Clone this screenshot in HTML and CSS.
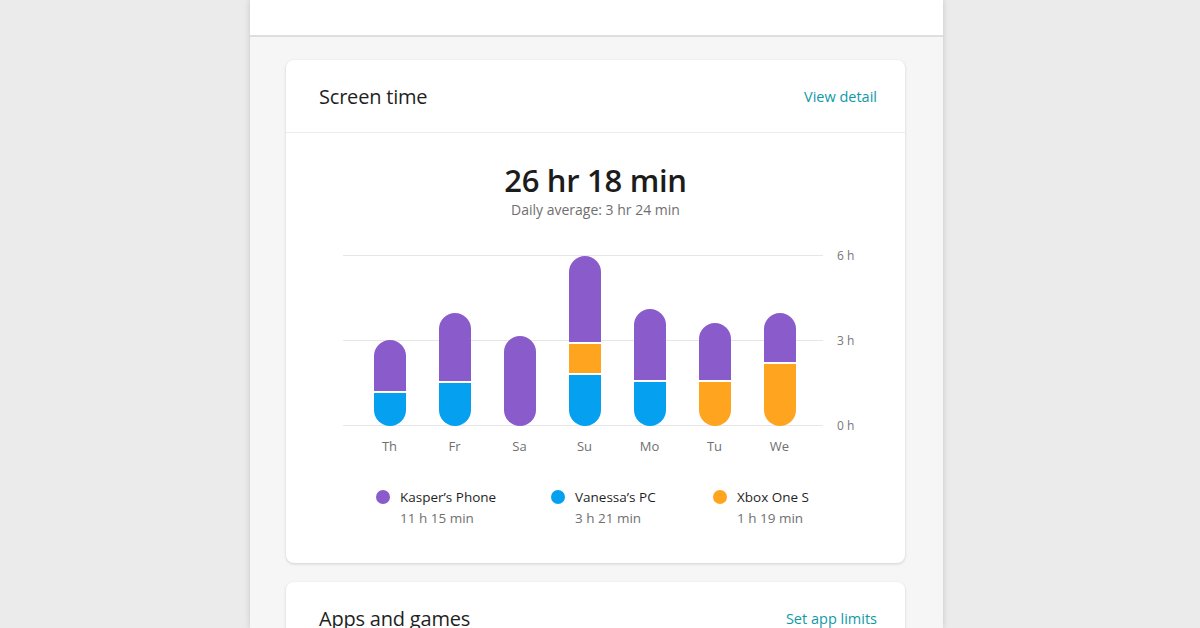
FILE: index.html
```html
<!DOCTYPE html>
<html lang="en">
<head>
<meta charset="utf-8">
<title>Screen time</title>
<link rel="stylesheet" href="styles.css">
</head>
<body>
<div class="page">
  <div class="topbar"></div>
  <div class="content">
    <section class="card">
      <header class="card-header">
        <h2 class="card-title">Screen time</h2>
        <a class="card-link" href="#">View detail</a>
      </header>
      <div class="card-body">
        <div class="summary">
          <div class="total">26 hr 18 min</div>
          <div class="average">Daily average: 3 hr 24 min</div>
        </div>
        <div class="chart">
          <div class="plot">
            <div class="col"><div class="bar"><div class="seg purple" style="height:51px"></div><div class="seg blue" style="height:33px"></div></div></div>
            <div class="col"><div class="bar"><div class="seg purple" style="height:68px"></div><div class="seg blue" style="height:43px"></div></div></div>
            <div class="col"><div class="bar"><div class="seg purple" style="height:90px"></div></div></div>
            <div class="col"><div class="bar"><div class="seg purple" style="height:86px"></div><div class="seg orange" style="height:29px"></div><div class="seg blue" style="height:51px"></div></div></div>
            <div class="col"><div class="bar"><div class="seg purple" style="height:71px"></div><div class="seg blue" style="height:44px"></div></div></div>
            <div class="col"><div class="bar"><div class="seg purple" style="height:57px"></div><div class="seg orange" style="height:44px"></div></div></div>
            <div class="col"><div class="bar"><div class="seg purple" style="height:49px"></div><div class="seg orange" style="height:62px"></div></div></div>
          </div>
          <div class="axis">
            <span>6 h</span>
            <span>3 h</span>
            <span>0 h</span>
          </div>
          <div class="days">
            <span>Th</span><span>Fr</span><span>Sa</span><span>Su</span><span>Mo</span><span>Tu</span><span>We</span>
          </div>
        </div>
        <div class="legend">
          <div class="legend-item">
            <span class="dot purple"></span>
            <div class="legend-text"><div class="legend-name">Kasper’s Phone</div><div class="legend-time">11 h 15 min</div></div>
          </div>
          <div class="legend-item">
            <span class="dot blue"></span>
            <div class="legend-text"><div class="legend-name">Vanessa’s PC</div><div class="legend-time">3 h 21 min</div></div>
          </div>
          <div class="legend-item">
            <span class="dot orange"></span>
            <div class="legend-text"><div class="legend-name">Xbox One S</div><div class="legend-time">1 h 19 min</div></div>
          </div>
        </div>
      </div>
    </section>
    <section class="card">
      <header class="card-header">
        <h2 class="card-title">Apps and games</h2>
        <a class="card-link" href="#">Set app limits</a>
      </header>
    </section>
  </div>
</div>
</body>
</html>
```

FILE: styles.css
```css
* { box-sizing: border-box; }
html, body { margin: 0; padding: 0; }
body {
  background: #ebebeb;
  font-family: "Open Sans", "Noto Sans", sans-serif;
  color: #1f1f1f;
  height: 628px;
  overflow: hidden;
}
.page {
  width: 693px;
  margin-left: 250px;
  height: 628px;
  background: #f6f6f6;
  box-shadow: 0 0 6px rgba(0,0,0,0.16);
}
.topbar {
  height: 37px;
  background: #fff;
  border-bottom: 2px solid #dedede;
}
.content {
  padding: 23px 38px 0 36px;
  display: flex;
  flex-direction: column;
  gap: 19px;
}
.card {
  background: #fff;
  border-radius: 8px;
  box-shadow: 0 1px 3px rgba(0,0,0,0.16);
}
.card-header {
  height: 73px;
  display: flex;
  align-items: center;
  justify-content: space-between;
  padding: 0 28px 0 33px;
  border-bottom: 1px solid #ececec;
}
.card-title {
  margin: 0;
  font-size: 20px;
  font-weight: 400;
  color: #1f1f1f;
  letter-spacing: -0.2px;
}
.card-link {
  color: #0f9aa6;
  text-decoration: none;
  font-size: 14.5px;
}
.card-body {
  padding: 28px 0 35px;
}
.summary {
  text-align: center;
}
.total {
  font-size: 31px;
  line-height: 38px;
  font-weight: 600;
  color: #1c1c1c;
  letter-spacing: -0.3px;
}
.average {
  font-size: 14px;
  line-height: 20px;
  margin-top: 1px;
  color: #6f6f6f;
}
.chart {
  margin-top: 35px;
  padding-left: 57px;
  display: grid;
  grid-template-columns: 480px auto;
  column-gap: 14px;
}
.plot {
  height: 171px;
  display: flex;
  align-items: flex-end;
  padding-left: 14px;
  background:
    linear-gradient(#e6e6e6, #e6e6e6) 0 0 / 100% 1px no-repeat,
    linear-gradient(#e6e6e6, #e6e6e6) 0 85px / 100% 1px no-repeat,
    linear-gradient(#e6e6e6, #e6e6e6) 0 170px / 100% 1px no-repeat;
}
.col {
  width: 65px;
  display: flex;
  justify-content: center;
}
.bar {
  width: 32px;
  border-radius: 16px;
  overflow: hidden;
  display: flex;
  flex-direction: column;
  gap: 2px;
}
.seg { width: 100%; }
.purple { background: #8a5bcb; }
.blue { background: #06a0f0; }
.orange { background: #ffa41e; }
.axis {
  display: flex;
  flex-direction: column;
  justify-content: space-between;
  height: 171px;
  font-size: 12px;
  color: #777;
}
.axis span {
  line-height: 16px;
  margin: -7px 0 -8px;
}
.axis span:last-child { margin-bottom: -8px; }
.days {
  grid-column: 1;
  display: flex;
  padding-left: 14px;
  margin-top: 12px;
  font-size: 13px;
  line-height: 16px;
  color: #707070;
}
.days span {
  width: 65px;
  text-align: center;
}
.legend {
  margin-top: 32px;
  padding-left: 90px;
  display: grid;
  grid-template-columns: 175px 162px auto;
}
.legend-item {
  display: flex;
  gap: 10px;
}
.dot {
  width: 14px;
  height: 14px;
  border-radius: 50%;
  margin-top: 4px;
  flex: none;
}
.legend-name {
  font-size: 13.5px;
  line-height: 22px;
  color: #1f1f1f;
}
.legend-time {
  font-size: 13.5px;
  line-height: 20px;
  color: #707070;
}
```
